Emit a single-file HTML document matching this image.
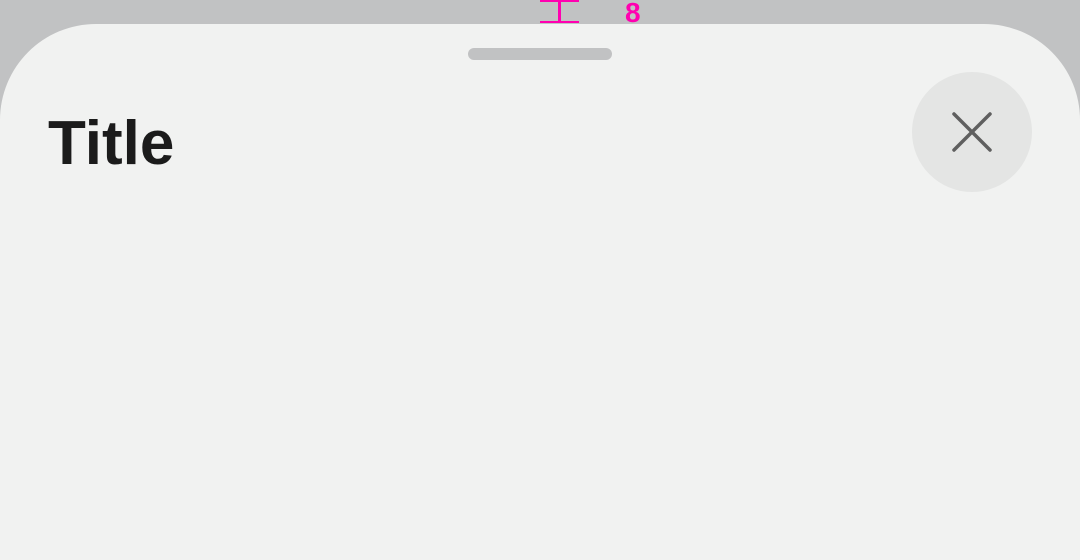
<!DOCTYPE html>
<html><head><meta charset="utf-8"><style>
html,body{margin:0;padding:0;width:1080px;height:560px;overflow:hidden;}
body{background:#c1c2c3;position:relative;font-family:"Liberation Sans",sans-serif;}
.sheet{position:absolute;left:0;top:24px;width:1080px;height:536px;background:#f1f2f1;border-radius:96px 96px 0 0;}
.handle{position:absolute;left:468px;top:48px;width:144px;height:12px;border-radius:6px;background:#c1c2c3;}
.title{position:absolute;left:48px;top:108px;font-size:62px;font-weight:bold;color:#1b1b1b;letter-spacing:0;line-height:72px;}
.close{position:absolute;left:912px;top:72px;width:120px;height:120px;border-radius:60px;background:#e4e5e4;}
.m{position:absolute;background:#ff00b0;}
.eight{position:absolute;left:625px;top:-2px;font-size:28px;font-weight:bold;color:#ff00b0;line-height:30px;}
</style></head><body>
<div class="m" style="left:540px;top:0;width:39px;height:2px"></div>
<div class="m" style="left:540px;top:21px;width:39px;height:2px"></div>
<div class="m" style="left:558px;top:0;width:3px;height:23px"></div>
<div class="eight">8</div>
<div class="sheet"></div>
<div class="handle"></div>
<div class="title">Title</div>
<div class="close"><svg width="120" height="120" viewBox="0 0 120 120"><path d="M42 42L78 78M78 42L42 78" stroke="#5f5f5f" stroke-width="3.5" stroke-linecap="round"/></svg></div>
</body></html>
